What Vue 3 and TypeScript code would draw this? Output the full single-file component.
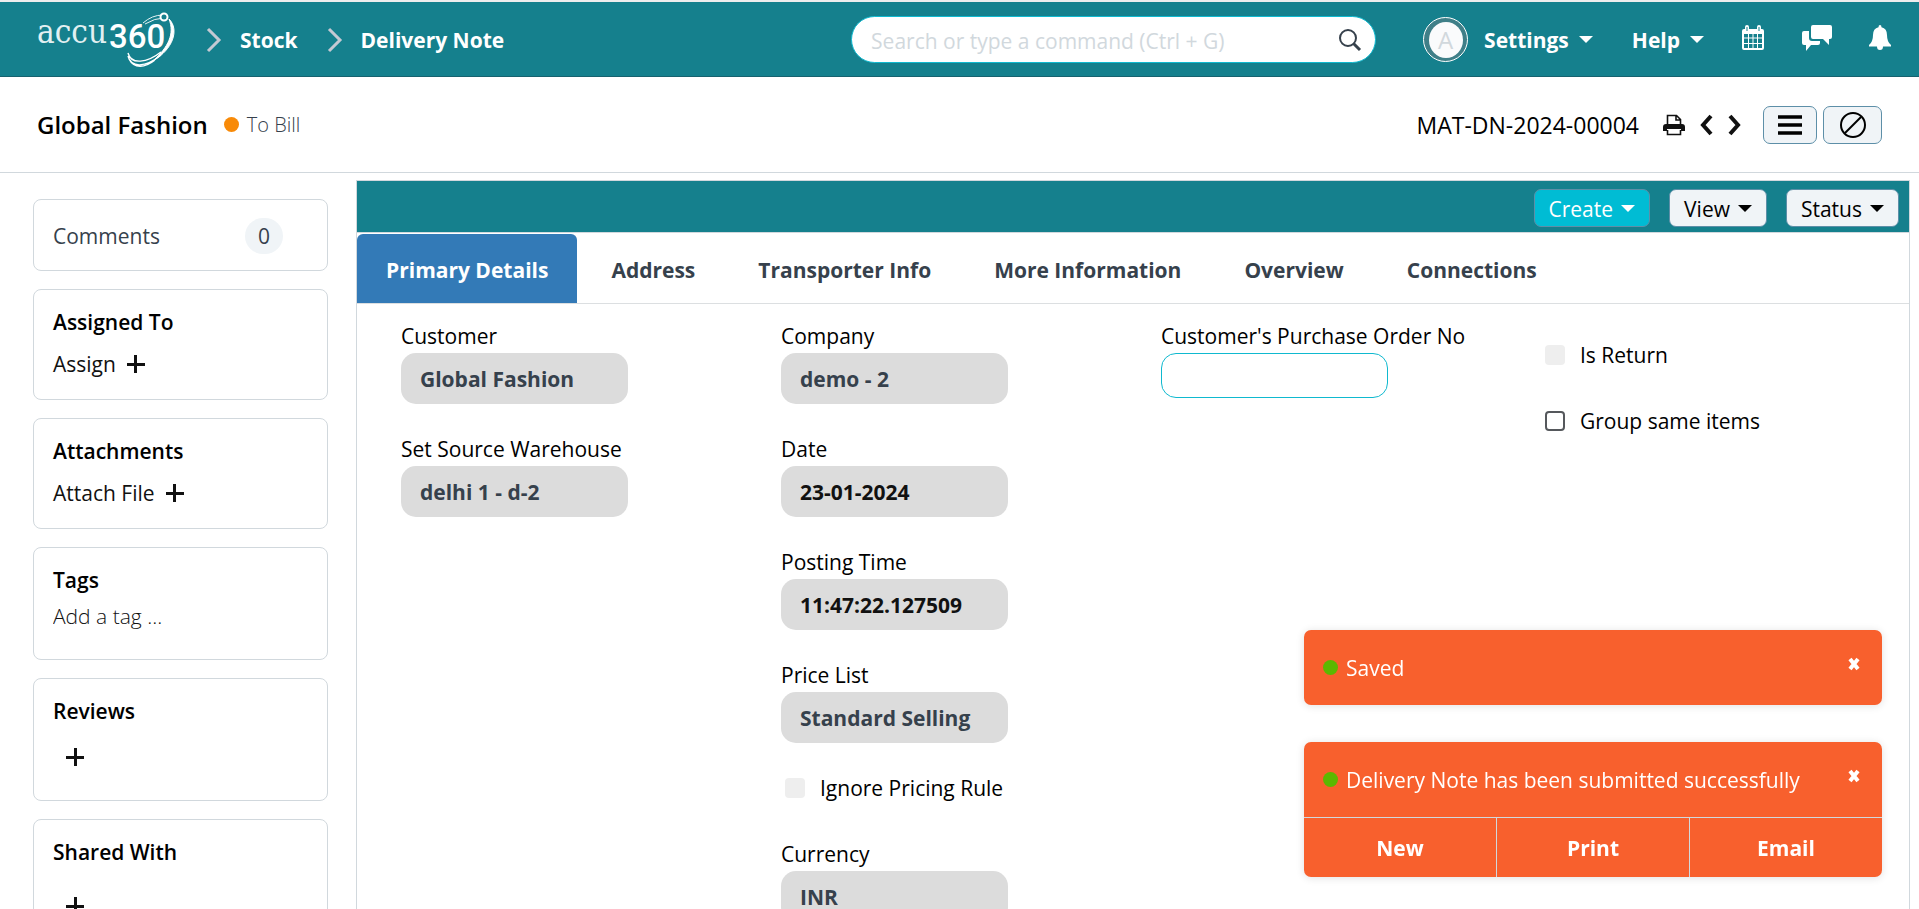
<script setup lang="ts">
import { ref } from 'vue'

interface Field {
  id: string
  label: string
  value?: string
  kind: 'link' | 'data' | 'input' | 'check'
  disabled?: boolean
}

const tabs = ['Primary Details', 'Address', 'Transporter Info', 'More Information', 'Overview', 'Connections']
const activeTab = ref('Primary Details')
const menus = ['Create', 'View', 'Status']
const search = ref('')

const columns: Field[][] = [
  [
    { id: 'customer', label: 'Customer', value: 'Global Fashion', kind: 'link' },
    { id: 'warehouse', label: 'Set Source Warehouse', value: 'delhi 1 - d-2', kind: 'link' },
  ],
  [
    { id: 'company', label: 'Company', value: 'demo - 2', kind: 'link' },
    { id: 'date', label: 'Date', value: '23-01-2024', kind: 'data' },
    { id: 'time', label: 'Posting Time', value: '11:47:22.127509', kind: 'data' },
    { id: 'price-list', label: 'Price List', value: 'Standard Selling', kind: 'link' },
    { id: 'ignore-rule', label: 'Ignore Pricing Rule', kind: 'check', disabled: true },
    { id: 'currency', label: 'Currency', value: 'INR', kind: 'link' },
  ],
  [{ id: 'po-no', label: "Customer's Purchase Order No", kind: 'input' }],
  [
    { id: 'is-return', label: 'Is Return', kind: 'check', disabled: true },
    { id: 'group-items', label: 'Group same items', kind: 'check' },
  ],
]

const toasts = ref([
  { id: 1, text: 'Saved', actions: [] as string[] },
  { id: 2, text: 'Delivery Note has been submitted successfully', actions: ['New', 'Print', 'Email'] },
])
const dismiss = (id: number) => {
  toasts.value = toasts.value.filter((t) => t.id !== id)
}
</script>

<template>
  <div class="app">
    <header class="navbar">
      <nav class="crumbs" aria-label="Breadcrumb">
        <a href="#" class="logo" aria-label="accu360">
          <svg width="140" height="60" viewBox="0 0 140 60" aria-hidden="true">
            <text x="0" y="33" class="logo-thin">accu</text>
            <text x="72" y="38" class="logo-bold">360</text>
            <path d="M106 13 Q115 5 126 5 M108 14 Q118 8 127 8" fill="none" stroke="#e6f3f4" stroke-width="1" />
            <path d="M132 9 C143 20 135 40 117 50 C131 37 138 24 132 9Z" fill="#fff" stroke="#fff" />
            <circle cx="127" cy="7" r="3.5" fill="#15808d" stroke="#fff" stroke-width="2" />
            <path d="M91 43 C94 55 110 53 124 42 M91 46 C94 58 108 58 124 45 M92 49 C97 59 108 58 118 50" fill="none" stroke="#fff" stroke-width="1.4" />
          </svg>
        </a>
        <svg class="sep" width="16" height="26" viewBox="0 0 16 26" aria-hidden="true"><path d="M2 2l11 11L2 24" /></svg>
        <a href="#">Stock</a>
        <svg class="sep" width="16" height="26" viewBox="0 0 16 26" aria-hidden="true"><path d="M2 2l11 11L2 24" /></svg>
        <a href="#">Delivery Note</a>
      </nav>

      <div class="tools">
        <div class="search">
          <input v-model="search" type="text" aria-label="Search" placeholder="Search or type a command (Ctrl + G)" />
          <svg width="24" height="24" viewBox="0 0 24 24" aria-hidden="true">
            <circle cx="10" cy="10" r="8" fill="none" stroke="#36414c" stroke-width="2" />
            <path d="M15.5 15.5L22 22" stroke="#36414c" stroke-width="3" />
          </svg>
        </div>
        <span class="avatar"><span>A</span></span>
        <button type="button" class="nav-btn settings">Settings <i class="caret"></i></button>
        <button type="button" class="nav-btn help">Help <i class="caret"></i></button>
        <button type="button" class="icon-btn" aria-label="Calendar">
          <svg width="24" height="26" viewBox="0 0 24 26">
            <path fill="#fff" fill-rule="evenodd" d="M3 4h1V2q0-2 2-2t2 2v2h8V2q0-2 2-2t2 2v2h1q2 0 2 2v17q0 2-2 2H3q-2 0-2-2V6q0-2 2-2zM3 9v3.500h4V9zM8 9v3.500h3.500V9zM12.500 9v3.500H16V9zM17 9v3.500h4V9zM3 13.500V18h4v-4.500zM8 13.500V18h3.500v-4.500zM12.500 13.500V18H16v-4.500zM17 13.500V18h4v-4.500zM3 19v4h4v-4zM8 19v4h3.500v-4zM12.500 19v4H16v-4zM17 19v4h4v-4z" />
            <path d="M6 2v4M18 2v4" stroke="#15808d" stroke-width="1" />
          </svg>
        </button>
        <button type="button" class="icon-btn" aria-label="Chat">
          <svg width="30" height="26" viewBox="0 0 30 26">
            <path fill="#fff" d="M11 0h17q2 0 2 2v10q0 2-2 2h-1v6l-6-6H11q-2 0-2-2V2q0-2 2-2zM2 6h5v7q0 3 3 3h8v2q0 2-2 2H9l-5 6v-6H2q-2 0-2-2V8q0-2 2-2z" />
          </svg>
        </button>
        <button type="button" class="icon-btn" aria-label="Notifications">
          <svg width="22" height="26" viewBox="0 0 22 26">
            <path fill="#fff" d="M11 0q1.500 0 1.500 2.200Q18 3.500 18 10q0 7 4 10v1.500H14Q14 25 11 25T8 21.500H0V20q4-3 4-10 0-6.500 5.500-7.800Q9.500 0 11 0z" />
          </svg>
        </button>
      </div>
    </header>

    <div class="page-head">
      <h1>Global Fashion</h1>
      <span class="status"><i class="dot orange"></i>To Bill</span>
      <div class="head-actions">
        <span class="doc-name">MAT-DN-2024-00004</span>
        <button type="button" class="icon-btn print" aria-label="Print">
          <svg width="22" height="22" viewBox="0 0 22 22">
            <path d="M4.500 10V1.500h9l4 4V10M13 1.500V6h4.500M4.500 16v4.500h13V16" fill="none" stroke="#111" stroke-width="1.600" />
            <path fill="#111" fill-rule="evenodd" d="M3 10h16q3 0 3 3v4h-4v-2H4v2H0v-4q0-3 3-3z" />
          </svg>
        </button>
        <button type="button" class="icon-btn" aria-label="Previous">
          <svg width="14" height="22" viewBox="0 0 14 22"><path d="M12 2L4 11l8 9" fill="none" stroke="#111" stroke-width="4" /></svg>
        </button>
        <button type="button" class="icon-btn next" aria-label="Next">
          <svg width="14" height="22" viewBox="0 0 14 22"><path d="M2 2l8 9-8 9" fill="none" stroke="#111" stroke-width="4" /></svg>
        </button>
        <button type="button" class="btn menu" aria-label="Menu">
          <svg width="24" height="20" viewBox="0 0 24 20"><path d="M0 2h24M0 10h24M0 18h24" stroke="#000" stroke-width="3.500" /></svg>
        </button>
        <button type="button" class="btn cancel" aria-label="Cancel">
          <svg width="28" height="28" viewBox="0 0 28 28"><path d="M6 22L22 6" stroke="#000" stroke-width="2" /><circle cx="14" cy="14" r="12" fill="none" stroke="#000" stroke-width="2" /></svg>
        </button>
      </div>
    </div>

    <div class="body">
      <aside class="sidebar">
        <section class="card comments"><span>Comments</span><span class="count">0</span></section>
        <section class="card">
          <h2>Assigned To</h2>
          <button type="button" class="add">Assign <i class="plus"></i></button>
        </section>
        <section class="card">
          <h2>Attachments</h2>
          <button type="button" class="add">Attach File <i class="plus"></i></button>
        </section>
        <section class="card tags">
          <h2>Tags</h2>
          <input type="text" aria-label="Add a tag" placeholder="Add a tag ..." />
        </section>
        <section class="card reviews">
          <h2>Reviews</h2>
          <button type="button" class="add only" aria-label="Add review"><i class="plus"></i></button>
        </section>
        <section class="card shared">
          <h2>Shared With</h2>
          <button type="button" class="add only" aria-label="Share"><i class="plus"></i></button>
        </section>
      </aside>

      <main class="panel">
        <div class="toolbar">
          <button v-for="m in menus" :key="m" type="button" class="btn" :class="{ primary: m === 'Create' }">
            {{ m }}<i class="caret"></i>
          </button>
        </div>
        <div class="tabs" role="tablist">
          <button
            v-for="t in tabs"
            :key="t"
            type="button"
            role="tab"
            :aria-selected="t === activeTab"
            :class="{ active: t === activeTab }"
            @click="activeTab = t"
          >{{ t }}</button>
        </div>
        <form class="form" @submit.prevent>
          <div v-for="(col, i) in columns" :key="i" class="col">
            <div v-for="f in col" :key="f.id" :class="f.kind === 'check' ? 'check' : 'field'">
              <template v-if="f.kind === 'check'">
                <input :id="f.id" type="checkbox" :disabled="f.disabled" />
                <label :for="f.id">{{ f.label }}</label>
              </template>
              <template v-else>
                <label :for="f.id">{{ f.label }}</label>
                <input :id="f.id" type="text" :class="f.kind" :value="f.value" :readonly="f.kind !== 'input'" />
              </template>
            </div>
          </div>
        </form>
      </main>
    </div>

    <div class="toasts" role="status">
      <div v-for="t in toasts" :key="t.id" class="toast">
        <div class="message">
          <i class="dot green"></i>
          <span>{{ t.text }}</span>
          <button type="button" class="icon-btn close" aria-label="Close" @click="dismiss(t.id)">
            <svg width="12" height="14" viewBox="0 0 12 14"><path d="M2 2l8 10M10 2L2 12" stroke="#fff" stroke-width="4" /></svg>
          </button>
        </div>
        <div v-if="t.actions.length" class="actions">
          <button v-for="a in t.actions" :key="a" type="button">{{ a }}</button>
        </div>
      </div>
    </div>
  </div>
</template>

<style>
body {
  margin: 0;
}
</style>

<style scoped>
.app {
  display: flex;
  flex-direction: column;
  height: 100vh;
  overflow: hidden;
  box-sizing: border-box;
  border-top: 2px solid #ededed;
  background: #fff;
  color: #000;
  font: 400 21px/30px "Segoe UI", "Open Sans", "Noto Sans", sans-serif;
}
.app * {
  box-sizing: border-box;
}
button,
input {
  font: inherit;
  color: inherit;
}
button {
  background: none;
  border: 0;
  padding: 0;
  cursor: pointer;
}
a {
  color: inherit;
  text-decoration: none;
}
svg {
  display: block;
  flex: none;
}
.navbar {
  flex: none;
  display: flex;
  justify-content: space-between;
  align-items: center;
  height: 75px;
  padding: 1px 28px 0 37px;
  background: #15808d;
  border-bottom: 1px solid #17626f;
  color: #fff;
  font-weight: 700;
}
.crumbs {
  display: flex;
  align-items: center;
}
.sep {
  margin: 0 18px 0 29px;
}
.sep path {
  fill: none;
  stroke: #c4c9d3;
  stroke-width: 3;
}
.logo-thin {
  font: 400 33px "DejaVu Serif Condensed", "Noto Sans", serif;
  fill: #e2f0f2;
}
.logo-bold {
  font: 500 33px "Roboto", "Liberation Sans", sans-serif;
  fill: #fff;
}
.tools {
  display: flex;
  align-items: center;
}
.search {
  display: flex;
  align-items: center;
  width: 525px;
  height: 47px;
  padding: 0 13px 0 19px;
  border: 1px solid #0fb9cf;
  border-radius: 24px;
  background: #fff;
}
.search input {
  flex: 1;
  min-width: 0;
  border: 0;
  outline: 0;
  padding: 2px 0 0;
  background: none;
  color: #36414c;
  font-weight: 400;
}
.search input::placeholder {
  color: #d1d8dd;
  opacity: 1;
}
.avatar {
  display: grid;
  place-items: center;
  width: 45px;
  height: 45px;
  margin-left: 47px;
  border: 1px solid #fff;
  border-radius: 50%;
  background: #3f7f88;
}
.avatar span {
  display: grid;
  place-items: center;
  width: 34px;
  height: 36px;
  border-radius: 50%;
  background: #fafbfc;
  color: #d1d8dd;
  font-size: 24px;
  font-weight: 400;
}
.nav-btn {
  display: flex;
  align-items: center;
  gap: 10px;
}
.settings {
  margin-left: 16px;
}
.help {
  margin: 0 37px 0 39px;
}
.caret {
  border: 7px solid transparent;
  border-top-color: currentColor;
  border-bottom: 0;
}
.tools .icon-btn {
  margin-bottom: 4px;
}
.tools .icon-btn + .icon-btn {
  margin-left: 37px;
}
.page-head {
  flex: none;
  display: flex;
  align-items: center;
  height: 96px;
  padding: 0 37px;
  border-bottom: 1px solid #d1d8dd;
}
h1 {
  margin: 0 16px 0 0;
  font-size: 24px;
  font-weight: 600;
}
.status {
  display: flex;
  align-items: center;
  gap: 8px;
  color: #36414c;
  font-size: 20px;
  font-weight: 300;
}
.dot {
  flex: none;
  width: 15px;
  height: 15px;
  border-radius: 50%;
}
.orange {
  background: #f88a08;
}
.green {
  background: #5cb800;
}
.head-actions {
  display: flex;
  align-items: center;
  margin-left: auto;
}
.doc-name {
  font-size: 23px;
}
.print {
  margin: 0 14px 0 24px;
}
.next {
  margin: 0 21px 0 15px;
}
.btn {
  display: flex;
  align-items: center;
  justify-content: center;
  height: 38px;
  padding: 0 14px;
  border: 1px solid #5d8fa8;
  border-radius: 7px;
  background: #f0f4f7;
}
.menu {
  width: 54px;
  margin-right: 6px;
}
.cancel {
  width: 59px;
}
.body {
  flex: 1;
  min-height: 0;
  display: flex;
  overflow: auto;
  scrollbar-width: none;
  padding: 7px 9px 0 33px;
}
.sidebar {
  flex: none;
  display: flex;
  flex-direction: column;
  gap: 18px;
  width: 295px;
  padding-top: 19px;
}
.card {
  flex: none;
  display: flex;
  flex-direction: column;
  align-items: flex-start;
  gap: 12px;
  min-height: 111px;
  padding: 17px 19px 16px;
  border: 1px solid #d1d8dd;
  border-radius: 8px;
}
.comments {
  flex-direction: row;
  align-items: center;
  justify-content: space-between;
  min-height: 72px;
  padding: 1px 44px 0 19px;
  color: #36414c;
}
.count {
  width: 38px;
  padding: 3px 0;
  border-radius: 18px;
  background: #f0f4f7;
  text-align: center;
}
h2 {
  margin: 0;
  font-size: 21px;
  line-height: 30px;
  font-weight: 600;
}
.tags {
  gap: 6px;
  min-height: 113px;
}
.tags input {
  width: 100%;
  padding: 0;
  border: 0;
  outline: 0;
  background: none;
  font-weight: 300;
}
.tags input::placeholder {
  color: #111;
  opacity: 1;
}
.reviews {
  min-height: 123px;
}
.shared {
  gap: 20px;
  min-height: 132px;
}
.add {
  display: flex;
  align-items: center;
  gap: 11px;
  color: #111;
}
.only {
  height: 38px;
  padding: 0 13px;
}
.plus {
  width: 18px;
  height: 18px;
  background:
    linear-gradient(#111, #111) center / 18px 3px no-repeat,
    linear-gradient(#111, #111) center / 3px 18px no-repeat;
}
.panel {
  flex: 1;
  min-width: 0;
  min-height: 760px;
  align-self: flex-start;
  margin-left: 28px;
  border: 1px solid #d1d8dd;
}
.toolbar {
  display: flex;
  justify-content: flex-end;
  align-items: center;
  gap: 19px;
  height: 52px;
  padding: 2px 10px 0 0;
  background: #15808d;
  border-bottom: 1px solid #d1d8dd;
}
.toolbar .btn {
  gap: 8px;
  padding: 2px 14px 0;
}
.toolbar .primary {
  background: #00bcd4;
  color: #fff;
}
.tabs {
  display: flex;
  gap: 5px;
  height: 71px;
  padding-top: 1px;
  border-bottom: 1px solid #dcdfe1;
}
.tabs button {
  padding: 2px 28px 0;
  border: 1px solid transparent;
  border-radius: 6px 6px 0 0;
  color: #36414c;
  font-weight: 700;
}
.tabs .active {
  background: #337ab7;
  color: #fff;
}
.form {
  display: grid;
  grid-template-columns: repeat(4, minmax(0, 1fr));
  gap: 40px;
  padding: 16px 28px 40px 44px;
}
.field {
  height: 113px;
}
.field label {
  display: block;
  height: 33px;
  line-height: 32px;
  white-space: nowrap;
}
.field input {
  display: block;
  width: 66.67%;
  height: 51px;
  padding: 0 19px;
  border: 0;
  border-radius: 15px;
  outline: 0;
  background: #dcdcdc;
  color: #36414c;
  font-weight: 700;
}
.field .data {
  color: #111;
}
.field .input {
  height: 45px;
  border: 1px solid #0fb9cf;
  background: #fff;
}
.check {
  display: flex;
  align-items: center;
  gap: 15px;
  height: 32px;
  margin-bottom: 34px;
  padding-left: 4px;
}
.check:first-child {
  margin-top: 19px;
}
.check input {
  appearance: none;
  width: 20px;
  height: 20px;
  margin: 0;
  border: 2px solid #55585c;
  border-radius: 4px;
  background: #fff;
}
.check input:disabled {
  border: 0;
  background: #eee;
}
.toasts {
  position: fixed;
  right: 37px;
  bottom: 32px;
  display: flex;
  flex-direction: column;
  gap: 37px;
  width: 578px;
  color: #fff;
}
.toast {
  border-radius: 7px;
  background: #f8602d;
  box-shadow: 0 1px 8px rgba(0, 0, 0, 0.12);
}
.message {
  display: flex;
  align-items: center;
  gap: 8px;
  height: 75px;
  padding: 0 22px 0 19px;
}
.close {
  margin: 0 0 8px auto;
}
.actions {
  display: flex;
  height: 60px;
  border-top: 1px solid #d1d8dd;
}
.actions button {
  flex: 1;
  font-weight: 700;
}
.actions button + button {
  border-left: 1px solid #d1d8dd;
}
</style>
